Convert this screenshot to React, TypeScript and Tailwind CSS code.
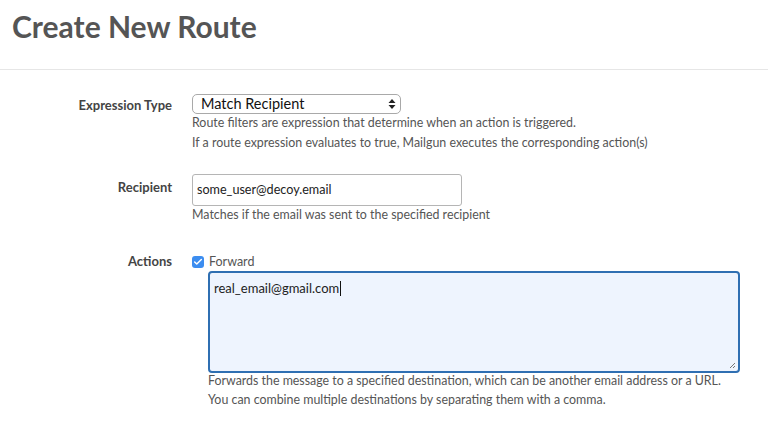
import { Check } from "lucide-react";

function FieldRow({
  label,
  labelClass,
  children,
}: {
  label: string;
  labelClass?: string;
  children: React.ReactNode;
}) {
  return (
    <div className="flex">
      <div className={`w-[172px] shrink-0 text-right text-[13px] font-bold text-[#444] ${labelClass ?? ""}`}>
        {label}
      </div>
      <div className="ml-5 flex-1">{children}</div>
    </div>
  );
}

export default function App() {
  return (
    <div className="h-[423px] w-[768px] overflow-hidden bg-white font-['Lato',sans-serif] text-[#555]">
      <div className="h-[70px] border-b border-[#e6e6e6] px-3 pt-[6px]">
        <h1 className="text-[30px] font-bold leading-[40px] text-[#555]">Create New Route</h1>
      </div>

      <div className="pt-6">
        <FieldRow label="Expression Type" labelClass="pt-[2px]">
          <div className="flex h-5 w-[209px] items-center justify-between rounded-[5px] border border-[#a9a9a9] pl-2 pr-1 text-[14.5px] text-[#111]">
            <span>Match Recipient</span>
            <svg width="8" height="12" viewBox="0 0 8 12">
              <path d="M4 1 L7.5 5 L0.5 5 Z M4 11 L7.5 7 L0.5 7 Z" fill="#222" />
            </svg>
          </div>
          <p className="mt-[-1px] text-[12.4px] leading-5">
            Route filters are expression that determine when an action is triggered.
            <br />
            If a route expression evaluates to true, Mailgun executes the corresponding action(s)
          </p>
        </FieldRow>

        <div className="h-[21px]" />

        <FieldRow label="Recipient" labelClass="pt-[4px]">
          <div className="flex h-8 w-[270px] items-center rounded-[3px] border border-[#b5b5b5] px-1 text-[12.6px] text-[#222]">
            some_user@decoy.email
          </div>
          <p className="mt-[-1px] text-[12.4px] leading-5">
            Matches if the email was sent to the specified recipient
          </p>
        </FieldRow>

        <div className="h-[28px]" />

        <FieldRow label="Actions" labelClass="mt-[-1px]">
          <div className="flex items-center gap-[5px] text-[12.5px] leading-[18px]">
            <span className="flex h-3 w-3 items-center justify-center rounded-[3px] bg-[#3c8df0]">
              <Check size={10} strokeWidth={3.5} color="white" />
            </span>
            <span>Forward</span>
          </div>
          <div className="ml-4 mr-[28px]">
            <div className="relative h-[102px] rounded-[4px] border-2 border-[#2f6fb2] bg-[#eef4fe] px-[4px] pt-[5px] text-[13px] text-[#222]">
              <span>real_email@gmail.com</span>
              <span className="ml-[1px] inline-block h-[15px] w-px translate-y-[3px] bg-[#111]" />
              <svg className="absolute bottom-[2px] right-[2px]" width="7" height="7" viewBox="0 0 7 7">
                <path d="M1 6 L6 1 M4 6 L6 4" stroke="#777" strokeWidth="1" />
              </svg>
            </div>
            <p className="mt-[-2px] text-[12.4px] leading-[19px]">
              Forwards the message to a specified destination, which can be another email address or a URL.
              <br />
              You can combine multiple destinations by separating them with a comma.
            </p>
          </div>
        </FieldRow>
      </div>
    </div>
  );
}
